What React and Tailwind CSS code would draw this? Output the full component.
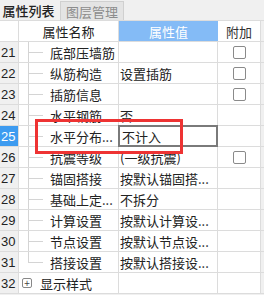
import React from 'react'

const ROWS = [
  { n: 21, name: '底部压墙筋', value: '', check: true },
  { n: 22, name: '纵筋构造', value: '设置插筋', check: true },
  { n: 23, name: '插筋信息', value: '', check: true },
  { n: 24, name: '水平钢筋', value: '否' },
  { n: 25, name: '水平分布...', value: '不计入', editing: true },
  { n: 26, name: '抗震等级', value: '(一级抗震)', check: true },
  { n: 27, name: '锚固搭接', value: '按默认锚固搭...' },
  { n: 28, name: '基础上定...', value: '不拆分' },
  { n: 29, name: '计算设置', value: '按默认计算设...' },
  { n: 30, name: '节点设置', value: '按默认节点设...' },
  { n: 31, name: '搭接设置', value: '按默认搭接设...', last: true },
]

const font = { fontFamily: '"Noto Sans CJK SC", "Liberation Sans", sans-serif' }

function TreeLines({ last }) {
  return (
    <div className="relative w-[31px] h-full shrink-0">
      <div className={`absolute left-[9px] top-0 w-px bg-[#d4d4d4] ${last ? 'h-1/2' : 'h-full'}`} />
      <div className="absolute left-[9px] top-1/2 w-[15px] h-px bg-[#d4d4d4]" />
    </div>
  )
}

function Row({ row }) {
  return (
    <div className="flex h-[21px] border-b border-[#dcdcdc] text-[13px] leading-none text-[#222]">
      <div
        className={`w-[19px] shrink-0 flex items-center border-r border-[#dcdcdc] pl-[1px] ${row.editing ? 'bg-[#3d9bf0] text-white' : 'bg-[#f0f0f0]'}`}
        style={{ fontFamily: '"Liberation Sans", sans-serif' }}
      >
        {row.n}
      </div>
      <div className="w-[100px] shrink-0 flex items-center border-r border-[#dcdcdc] bg-white overflow-hidden">
        <TreeLines last={row.last} />
        <span className="whitespace-nowrap">{row.name}</span>
      </div>
      <div className="w-[99px] shrink-0 flex items-center border-r border-[#dcdcdc] bg-white relative">
        {row.editing ? (
          <div className="absolute -left-px -top-px w-[100px] h-[22px] flex items-center border-2 border-[#7a7a7a] pl-[2px]">
            {row.value}
          </div>
        ) : (
          <span className="pl-[1px] whitespace-nowrap">{row.value}</span>
        )}
      </div>
      <div className="w-[43px] shrink-0 border-r border-[#dcdcdc] bg-white flex items-center justify-center">
        {row.check && <div className="w-[13px] h-[13px] border border-[#8a8a8a] rounded-[2px] bg-white" />}
      </div>
    </div>
  )
}

export default function App() {
  return (
    <div className="w-[264px] h-[295px] bg-[#f0f0f0] overflow-hidden relative" style={font}>
      {/* tabs */}
      <div className="flex h-[20px] items-end bg-[#f0f0f0] text-[13px] leading-none">
        <div className="w-[57px] h-[20px] flex items-center justify-center text-[#222] font-medium">属性列表</div>
        <div className="ml-[3px] w-[64px] h-[19px] flex items-center justify-center bg-[#e4e4e4] border border-b-0 border-[#d0d0d0] text-[#8c8c8c]">图层管理</div>
      </div>

      {/* header */}
      <div className="flex h-[22px] border-y border-[#dcdcdc] text-[13px] leading-none">
        <div className="w-[19px] shrink-0 border-r border-[#dcdcdc] bg-white" />
        <div className="w-[100px] shrink-0 flex items-center justify-center border-r border-[#dcdcdc] bg-white text-[#222]">属性名称</div>
        <div className="w-[99px] shrink-0 flex items-center justify-center bg-[#84bbf6] text-white">属性值</div>
        <div className="w-[43px] shrink-0 flex items-center justify-center border-r border-[#dcdcdc] bg-white text-[#333]">附加</div>
      </div>

      {ROWS.map(r => <Row key={r.n} row={r} />)}

      {/* row 32 */}
      <div className="flex h-[21px] border-b border-[#dcdcdc] text-[13px] leading-none text-[#222]">
        <div className="w-[19px] shrink-0 flex items-center border-r border-[#dcdcdc] bg-[#f0f0f0] pl-[1px]" style={{ fontFamily: '"Liberation Sans", sans-serif' }}>32</div>
        <div className="w-[100px] shrink-0 flex items-center border-r border-[#dcdcdc] bg-white">
          <div className="ml-[3px] w-[10px] h-[10px] border border-[#888] rounded-[2px] flex items-center justify-center text-[10px] leading-none text-[#444]">+</div>
          <span className="ml-[8px]">显示样式</span>
        </div>
        <div className="w-[99px] shrink-0 border-r border-[#dcdcdc] bg-white" />
        <div className="w-[43px] shrink-0 border-r border-[#dcdcdc] bg-white" />
      </div>

      {/* red highlight */}
      <div className="absolute left-[35px] top-[119px] w-[148px] h-[35px] border-[3px] border-[#ee3333]" />
    </div>
  )
}
